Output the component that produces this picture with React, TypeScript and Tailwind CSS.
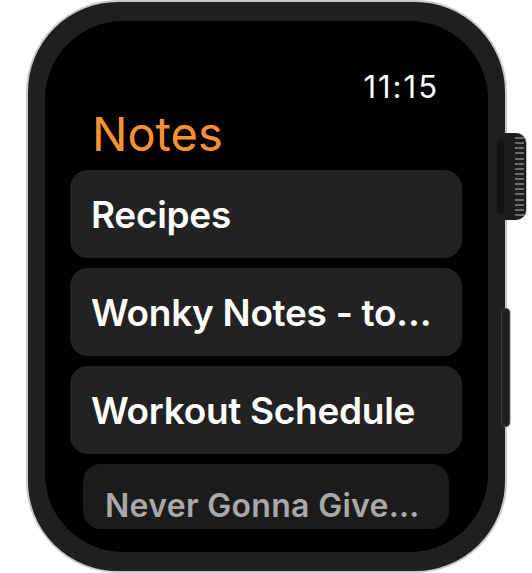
import React from "react";

const font = { fontFamily: 'Inter, "Noto Sans", sans-serif' };

function Card({ text }: { text: string }) {
  return (
    <div className="h-[88px] shrink-0 rounded-[18px] bg-[#222222] flex items-center pl-[21px] pr-[16px]">
      <span className="text-[37px] leading-none font-semibold text-white whitespace-nowrap tracking-[-0.3px]">
        {text}
      </span>
    </div>
  );
}

export default function App() {
  const ridges = Array.from({ length: 16 });
  return (
    <div className="relative w-[532px] h-[573px] bg-white overflow-hidden" style={font}>
      <div className="ml-[26px] w-[481px] h-[573px] rounded-[92px] border-2 border-[#c9c9c9] bg-[#1f1f1f] px-[17px] py-[19px]">
        <div className="h-full rounded-[78px] bg-black overflow-hidden flex flex-col pl-[25px] pr-[26px]">
          <div className="mt-[50px] pr-[23px] text-right text-[31px] leading-none text-white font-normal tracking-[2px]">
            11:15
          </div>
          <div className="mt-[8px] pl-[22px] text-[47px] leading-none text-[#ff9230] font-normal">
            Notes
          </div>
          <div className="mt-[13px] flex flex-col gap-[10px]">
            <Card text="Recipes" />
            <Card text="Wonky Notes - to…" />
            <Card text="Workout Schedule" />
            <div className="mx-[13px] h-[65px] shrink-0 rounded-[18px] bg-[#1b1b1b] pl-[22px] pt-[26px]">
              <span className="text-[32px] leading-none font-semibold text-[#a8a8a8] whitespace-nowrap tracking-[0.3px]">
                Never Gonna Give…
              </span>
            </div>
          </div>
        </div>
      </div>

      {/* Digital crown */}
      <div className="absolute left-[495px] top-[133px] w-[31px] h-[87px] rounded-[10px] bg-[#1d1d1d] shadow-[1px_0_0_#c4c4c4]">
        <div className="absolute left-[2px] top-[6px] bottom-[6px] w-[7px] rounded-full bg-[#141414]" />
        <div className="absolute right-[2px] top-[4px] bottom-[4px] w-[9px] flex flex-col justify-between">
          {ridges.map((_, i) => (
            <div key={i} className="h-[2px] bg-[#6c6c6c]" />
          ))}
        </div>
      </div>

      {/* Side button */}
      <div className="absolute left-[501px] top-[308px] w-[9px] h-[119px] rounded-full bg-[#1f1f1f] border border-[#3c3c3c] shadow-[1px_0_0_#c4c4c4]" />
    </div>
  );
}
